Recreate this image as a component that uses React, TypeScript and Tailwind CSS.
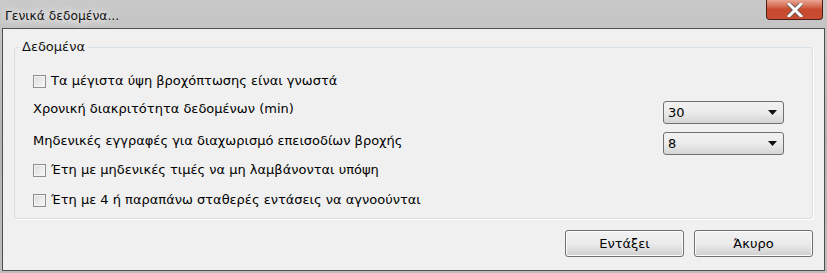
const font = { fontFamily: "Tahoma, 'DejaVu Sans', sans-serif" };

function Check({ label, className }: { label: string; className?: string }) {
  return (
    <label className={`flex items-center h-[20px] gap-[5px] ${className ?? ""}`}>
      <span className="w-[13px] h-[13px] border border-[#8e8f8f] bg-gradient-to-br from-[#dcdcdc] to-[#f8f8f8] shadow-[inset_0_0_0_1px_#f4f4f4]" />
      <span>{label}</span>
    </label>
  );
}

function Combo({ value }: { value: string }) {
  return (
    <div className="w-[121px] h-[23px] rounded-[3px] border border-[#707070] bg-gradient-to-b from-[#f2f2f2] via-[#ebebeb] to-[#d4d4d4] flex items-center justify-between pl-[4px] pr-[6px]">
      <span className="text-black">{value}</span>
      <svg width="9" height="5" viewBox="0 0 9 5">
        <path d="M0 0h9L4.5 5z" fill="#111" />
      </svg>
    </div>
  );
}

function Button({ label }: { label: string }) {
  return (
    <button className="w-[119px] h-[27px] rounded-[3px] border border-[#707070] bg-gradient-to-b from-[#f2f2f2] via-[#ebebeb] to-[#cfcfcf] shadow-[inset_0_0_0_1px_#fcfcfc] text-black">
      {label}
    </button>
  );
}

export default function App() {
  return (
    <div
      className="w-[827px] h-[273px] flex flex-col text-[13px] text-black bg-gradient-to-b from-[#c9c9c9] via-[#b3b3b3] to-[#bdbdbd]"
      style={font}
    >
      <div className="h-[28px] flex justify-between items-start shrink-0">
        <div className="pl-[5px] pt-[7px] text-[12.3px] text-[#111] [text-shadow:0_0_8px_#fff,0_0_8px_#fff]">
          Γενικά δεδομένα...
        </div>
        <div className="mr-[4px] w-[57px] h-[20px] rounded-b-[4px] border border-t-0 border-[#4a2018] bg-gradient-to-b from-[#e8a593] via-[#c94a2d] to-[#c84d33] flex items-center justify-center">
          <svg width="16" height="14" viewBox="0 0 16 14">
            <path
              d="M2 1 L14 13 M14 1 L2 13"
              stroke="#555"
              strokeWidth="4.5"
              strokeLinecap="square"
            />
            <path
              d="M2 1 L14 13 M14 1 L2 13"
              stroke="#fff"
              strokeWidth="3"
              strokeLinecap="square"
            />
          </svg>
        </div>
      </div>
      <div className="flex-1 mx-[2px] mb-[2px] border border-[#4f4f4f] bg-[#f0f0f0] flex flex-col px-[11px] pt-[10px]">
        <fieldset className="border border-[#d5dfe5] rounded-[3px] shadow-[1px_1px_0_#fff] px-[4px] h-[180px]">
          <legend className="px-[3px] text-[#111] leading-[16px]">Δεδομένα</legend>
          <div className="flex flex-col pl-[14px] pr-[24px]">
            <Check className="mt-[16px]" label="Τα μέγιστα ύψη βροχόπτωσης είναι γνωστά" />
            <div className="flex items-start justify-between mt-[10px]">
              <span className="leading-[16px]">Χρονική διακριτότητα δεδομένων (min)</span>
              <Combo value="30" />
            </div>
            <div className="flex items-start justify-between mt-[8px]">
              <span className="leading-[16px] mt-[1px]">Μηδενικές εγγραφές για διαχωρισμό επεισοδίων βροχής</span>
              <Combo value="8" />
            </div>
            <Check className="mt-[5px]" label="Έτη με μηδενικές τιμές να μη λαμβάνονται υπόψη" />
            <Check className="mt-[10px]" label="Έτη με 4 ή παραπάνω σταθερές εντάσεις να αγνοούνται" />
          </div>
        </fieldset>
        <div className="flex justify-end gap-[10px] mt-[11px]">
          <Button label="Εντάξει" />
          <Button label="Άκυρο" />
        </div>
      </div>
    </div>
  );
}
